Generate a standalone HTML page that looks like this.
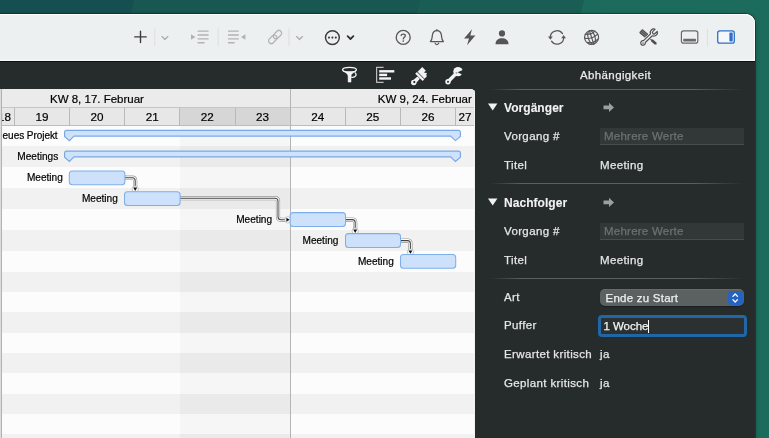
<!DOCTYPE html>
<html lang="de">
<head>
<meta charset="utf-8">
<title>Abhängigkeit</title>
<style>
html,body{margin:0;padding:0;}
body{width:769px;height:438px;overflow:hidden;position:relative;
  background:#1b6a5c;
  font-family:"Liberation Sans",sans-serif;}
.abs{position:absolute;}
#win{will-change:transform;position:absolute;left:0;top:14px;width:754.6px;height:424px;background:#eef0f0;border-top-right-radius:9px;overflow:hidden;
  box-shadow:0 0 0 0.8px rgba(0,20,20,.5),0 1px 5px rgba(0,0,0,.32);}
#toolbar{position:absolute;left:0;top:0;width:754.6px;height:46.8px;background:#edf0f1;box-shadow:inset 0 1px 0 #fff,inset -1px 0 0 rgba(255,255,255,.8),inset 0 -1.6px 0 #f7f9f9;border-top-right-radius:9px;z-index:2;}
#darkbar{position:absolute;left:0;top:46.8px;width:755px;height:377.2px;background:#262c2c;box-shadow:inset 0 1px 0 #0e1212;}
#gantt{position:absolute;left:0;top:75px;width:475.3px;height:349px;background:#fcfcfc;border-top-right-radius:4.5px;overflow:hidden;}
.row{position:absolute;left:0;width:475px;height:20.8px;}
.hdr{position:absolute;left:0;width:475px;background:#e9e9e9;}
.lbl{-webkit-text-stroke:0.2px #000;position:absolute;font-size:9.9px;color:#000;white-space:nowrap;text-align:right;line-height:12px;}
.day{-webkit-text-stroke:0.2px #000;position:absolute;top:19px;font-size:11.7px;color:#000;line-height:18px;text-align:center;width:55.14px;}
.wk{-webkit-text-stroke:0.2px #000;position:absolute;top:0.5px;font-size:11.5px;color:#000;line-height:18px;white-space:nowrap;}
#panel{position:absolute;left:476px;top:47px;width:278.6px;height:377px;color:#e6e6e6;font-size:11.5px;letter-spacing:0.37px;-webkit-text-stroke:0.25px currentColor;}
#panel .t{position:absolute;white-space:nowrap;line-height:14px;}
#panel .b{font-weight:bold;color:#f2f2f2;font-size:12px;letter-spacing:0.05px;-webkit-text-stroke:0.1px currentColor;}
.sep{position:absolute;left:14px;width:254px;height:1px;background:linear-gradient(90deg,rgba(90,96,96,0),rgba(90,96,96,1) 12%,rgba(90,96,96,1) 80%,rgba(90,96,96,0));}
.inp{position:absolute;left:124px;width:144px;height:17px;background:#323838;box-sizing:border-box;border-bottom:1px solid #474d4d;color:#6b7272;font-size:11.5px;letter-spacing:0.24px;line-height:17px;padding-left:4px;overflow:hidden;}
</style>
</head>
<body>
<svg class="abs" style="left:0;top:0" width="769" height="438" viewBox="0 0 769 438">
  <defs><linearGradient id="bgr" x1="0" x2="1" y1="0" y2="0"><stop offset="0" stop-color="#1a6558"/><stop offset="1" stop-color="#1c6c5d"/></linearGradient></defs>
  <rect x="0" y="0" width="769" height="438" fill="url(#bgr)"/>
  <polygon points="0,0 584,0 480,438 0,438" fill="#195d54"/>
  <polygon points="0,0 420,0 316,438 0,438" fill="#185752"/>
  <polygon points="0,0 134,0 30,438 0,438" fill="#164f4f"/>
</svg>
<div id="win">
  <div id="toolbar">
    <svg class="abs" style="left:0;top:0" width="755" height="47" viewBox="0 14 755 47" fill="none" stroke-linecap="round" stroke-linejoin="round">
      <!-- plus -->
      <path d="M134.8 36.9H146.2M140.5 31.3V42.6" stroke="#3c3c3c" stroke-width="1.4"/>
      <path d="M154.8 28.8V46" stroke="#dcdedd" stroke-width="1"/>
      <path d="M162 36.6L164.9 39.5L167.8 36.6" stroke="#adafaf" stroke-width="1.35"/>
      <!-- indent -->
      <g stroke="#b1b3b3" stroke-width="1.35" stroke-linecap="butt">
        <path d="M197.6 31.1H208.6M197.6 35H208.6M197.6 38.9H208.6M197.6 42.7H204.6"/>
      </g>
      <path d="M191 34.3L195.4 37L191 39.7Z" fill="#b1b3b3" stroke="none"/>
      <path d="M218.2 28.8V46" stroke="#dcdedd" stroke-width="1"/>
      <!-- outdent -->
      <g stroke="#b1b3b3" stroke-width="1.35" stroke-linecap="butt">
        <path d="M228 31.1H238.8M228 35H238.8M228 38.9H238.8M228 42.7H234.6"/>
      </g>
      <path d="M245.4 34.3L241 37L245.4 39.7Z" fill="#b1b3b3" stroke="none"/>
      <!-- link -->
      <g stroke="#b3b5b5" stroke-width="1.3" transform="translate(275.1 37) rotate(-45)">
        <rect x="-8.1" y="-2.75" width="9.6" height="5.5" rx="2.75"/>
        <rect x="-1.5" y="-2.75" width="9.6" height="5.5" rx="2.75"/>
      </g>
      <path d="M289 28.8V46" stroke="#dcdedd" stroke-width="1"/>
      <path d="M296.6 36.6L299.5 39.5L302.4 36.6" stroke="#adafaf" stroke-width="1.35"/>
      <!-- ellipsis -->
      <circle cx="332.4" cy="37.6" r="6.9" stroke="#3c3c3c" stroke-width="1.45"/>
      <circle cx="329" cy="37.6" r="1.05" fill="#3c3c3c" stroke="none"/>
      <circle cx="332.4" cy="37.6" r="1.05" fill="#3c3c3c" stroke="none"/>
      <circle cx="335.8" cy="37.6" r="1.05" fill="#3c3c3c" stroke="none"/>
      <path d="M347.6 36.2L350.5 39L353.4 36.2" stroke="#333" stroke-width="1.75"/>
      <!-- question -->
      <circle cx="403.2" cy="37.4" r="7" stroke="#585858" stroke-width="1.35"/>
      <path d="M401.2 35.6C401.2 33.6 405.3 33.6 405.3 35.7C405.3 37.1 403.3 37.3 403.3 38.9" stroke="#585858" stroke-width="1.35"/>
      <circle cx="403.3" cy="41" r="0.85" fill="#585858" stroke="none"/>
      <!-- bell -->
      <path d="M430.4 41.6C432.4 40 432 37.5 432.4 35C432.9 31.8 434.8 30.6 436.9 30.6C439 30.6 440.9 31.8 441.4 35C441.8 37.5 441.4 40 443.4 41.6Z" stroke="#585858" stroke-width="1.3"/>
      <path d="M435.1 43.2C435.5 45 438.3 45 438.7 43.2" stroke="#5a5a5a" stroke-width="1.2"/>
      <path d="M436.9 29.6V30.6" stroke="#5a5a5a" stroke-width="1.2"/>
      <!-- bolt -->
      <path d="M472 29.3L464 38.6H469L467 45.3L475.4 35.6H470.3Z" fill="#555" stroke="none"/>
      <!-- person -->
      <circle cx="502" cy="33.4" r="3.1" fill="#555" stroke="none"/>
      <path d="M495.5 44.2C495.5 40 498.5 38.3 502 38.3C505.5 38.3 508.5 40 508.5 44.2Z" fill="#555" stroke="none"/>
      <!-- sync -->
      <g stroke="#5a5a5a" stroke-width="1.3">
        <path d="M550.3 37.4A6.7 6.7 0 0 1 562.5 33.6"/>
        <path d="M563.7 37.4A6.7 6.7 0 0 1 551.5 41.2"/>
      </g>
      <path d="M548 36.6H552.8L550.4 39.8Z" fill="#5a5a5a" stroke="none"/>
      <path d="M566 38.2H561.2L563.6 35Z" fill="#5a5a5a" stroke="none"/>
      <!-- globe -->
      <g stroke="#585858" stroke-width="1.15" transform="rotate(-18 591.6 37.4)">
        <circle cx="591.6" cy="37.4" r="7"/>
        <ellipse cx="591.6" cy="37.4" rx="3.4" ry="7"/>
        <path d="M591.6 30.4V44.4"/>
        <path d="M584.8 36.2Q591.6 39.4 598.4 36.2"/>
        <path d="M586.4 32.4Q591.6 35 596.8 32.4"/>
        <path d="M585.8 40.8Q591.6 43.8 597.4 40.8"/>
      </g>
      <!-- tools -->
      <g transform="translate(648.5 37.5) rotate(40.4)" stroke="none" fill="#4e4e4e">
        <rect x="-10.4" y="-2.5" width="9" height="5" rx="1.1"/>
        <rect x="-2" y="-0.65" width="7" height="1.3"/>
        <path d="M4.4 -1.3H9.2L10.7 0L9.2 1.3H4.4Z"/>
      </g>
      <g transform="translate(648.5 37.5) rotate(40.4)" stroke="#9fa1a1" stroke-width="0.6">
        <path d="M-9.4 -0.9H-2.6M-9.4 0.9H-2.6"/>
      </g>
      <g transform="translate(648.45 37.7) rotate(-43.8)">
        <path d="M-5.6 -1.3L4.14 -1.3A3.6 3.6 0 0 1 10.77 -1.5L7.6 -1.5A1.5 1.5 0 0 0 7.6 1.5L10.77 1.5A3.6 3.6 0 0 1 4.14 1.3L-5.6 1.3A2.3 2.3 0 1 1 -5.6 -1.3Z" fill="#edf0f1" stroke="#edf0f1" stroke-width="2.4"/>
        <path d="M-5.6 -1.3L4.14 -1.3A3.6 3.6 0 0 1 10.77 -1.5L7.6 -1.5A1.5 1.5 0 0 0 7.6 1.5L10.77 1.5A3.6 3.6 0 0 1 4.14 1.3L-5.6 1.3A2.3 2.3 0 1 1 -5.6 -1.3Z" fill="#edf0f1" stroke="#4e4e4e" stroke-width="1.15"/>
        <circle cx="-7.5" cy="0" r="0.7" fill="#4e4e4e" stroke="none"/>
      </g>
      <!-- bottom panel -->
      <rect x="681.4" y="30.8" width="16.4" height="12.4" rx="2.2" stroke="#6a6a6a" stroke-width="1.2"/>
      <rect x="683.2" y="38.8" width="12.8" height="2.6" rx="0.6" fill="#6a6a6a" stroke="none"/>
      <path d="M707.4 29.4V45.8" stroke="#dcdedd" stroke-width="1"/>
      <!-- right panel -->
      <rect x="717.7" y="30.8" width="16.6" height="12.4" rx="2.2" stroke="#2f6fc4" stroke-width="1.3" fill="#f4f8fd"/>
      <rect x="729.4" y="32.6" width="3.3" height="8.8" rx="0.6" fill="#2f6fc4" stroke="none"/>
    </svg>
  </div>
  <div id="darkbar">
    <svg class="abs" style="left:0;top:0" width="476" height="29" viewBox="0 61 476 29" fill="none" stroke-linecap="round" stroke-linejoin="round">
      <!-- funnel -->
      <ellipse cx="349.5" cy="69.7" rx="6.9" ry="2.3" stroke="#f4f4f4" stroke-width="1.3"/>
      <path d="M342.9 70.6C344.6 72.4 347.9 73.4 348.1 76.2V82.1H351V76.2C351.2 73.4 354.4 72.4 356.1 70.6C353 72.6 346 72.6 342.9 70.6Z" fill="#f4f4f4" stroke="#f4f4f4" stroke-width="0.5"/>
      <path d="M351.4 77.2C355.6 78 357.4 74.6 355 72.6" stroke="#f4f4f4" stroke-width="1.2"/>
      <!-- gantt icon -->
      <path d="M383.6 67.3H376.6V82.3H383.6" stroke="#bdbdbd" stroke-width="1.2" stroke-linecap="butt"/>
      <rect x="379.2" y="70.1" width="15.1" height="2.4" fill="#f6f6f6"/>
      <rect x="379.2" y="73.7" width="7.9" height="2.4" fill="#f6f6f6"/>
      <rect x="379.2" y="77.3" width="11.8" height="2.4" fill="#f6f6f6"/>
      <!-- brush -->
      <g transform="translate(419.65 76.6) rotate(45)" fill="#f2f2f2" stroke="none">
        <path d="M-1.7 1.4H1.7L2.1 6.4A2.8 2.8 0 1 1 -2.1 6.4Z"/>
        <circle cx="0" cy="7.6" r="1.1" fill="#262c2c"/>
        <rect x="-5.2" y="-1.3" width="10.4" height="2.3"/>
        <path d="M-4.9 -2H4.9V-5.6H3.3V-7.2H1.5V-6.2H0.2V-8.6H-4.9Z"/>
      </g>
      <!-- wrench -->
      <path d="M448 81.8L456 73.6" stroke="#f2f2f2" stroke-width="3.5" stroke-linecap="round"/>
      <circle cx="448" cy="81.8" r="2.7" fill="#f2f2f2"/>
      <circle cx="448" cy="81.8" r="1" fill="#262c2c"/>
      <circle cx="458" cy="71.6" r="4.7" fill="#f2f2f2"/>
      <path d="M457.6 72.2L464 69.4L464 75.6Z" fill="#262c2c"/>
      <circle cx="456.4" cy="72.8" r="0.9" fill="#9a9c9c"/>
    </svg>
  </div>
  <div id="gantt">
    <div class="abs" style="left:0;top:0;width:476px;height:18.4px;background:#ebebeb;"></div>
    <div class="abs" style="left:0;top:18.4px;width:476px;height:18.1px;background:#e7e7e7;"></div>
    <div class="abs" style="left:179.8px;top:18.4px;width:110.3px;height:18.1px;background:#d6d6d6;"></div>
    <div class="abs" style="left:0;top:36.50px;width:476px;height:20.92px;background:#fcfcfc;"></div>
    <div class="abs" style="left:179.8px;top:36.50px;width:110.3px;height:20.92px;background:#f6f6f6;"></div>
    <div class="abs" style="left:0;top:57.37px;width:476px;height:20.92px;background:#f1f1f1;"></div>
    <div class="abs" style="left:179.8px;top:57.37px;width:110.3px;height:20.92px;background:#eaeaea;"></div>
    <div class="abs" style="left:0;top:78.24px;width:476px;height:20.92px;background:#fcfcfc;"></div>
    <div class="abs" style="left:179.8px;top:78.24px;width:110.3px;height:20.92px;background:#f6f6f6;"></div>
    <div class="abs" style="left:0;top:99.11px;width:476px;height:20.92px;background:#f1f1f1;"></div>
    <div class="abs" style="left:179.8px;top:99.11px;width:110.3px;height:20.92px;background:#eaeaea;"></div>
    <div class="abs" style="left:0;top:119.98px;width:476px;height:20.92px;background:#fcfcfc;"></div>
    <div class="abs" style="left:179.8px;top:119.98px;width:110.3px;height:20.92px;background:#f6f6f6;"></div>
    <div class="abs" style="left:0;top:140.85px;width:476px;height:20.92px;background:#f1f1f1;"></div>
    <div class="abs" style="left:179.8px;top:140.85px;width:110.3px;height:20.92px;background:#eaeaea;"></div>
    <div class="abs" style="left:0;top:161.72px;width:476px;height:20.92px;background:#fcfcfc;"></div>
    <div class="abs" style="left:179.8px;top:161.72px;width:110.3px;height:20.92px;background:#f6f6f6;"></div>
    <div class="abs" style="left:0;top:182.70px;width:476px;height:20.39px;background:#f1f1f1;"></div>
    <div class="abs" style="left:179.8px;top:182.70px;width:110.3px;height:20.39px;background:#eaeaea;"></div>
    <div class="abs" style="left:0;top:203.04px;width:476px;height:20.39px;background:#fcfcfc;"></div>
    <div class="abs" style="left:179.8px;top:203.04px;width:110.3px;height:20.39px;background:#f6f6f6;"></div>
    <div class="abs" style="left:0;top:223.38px;width:476px;height:20.39px;background:#f1f1f1;"></div>
    <div class="abs" style="left:179.8px;top:223.38px;width:110.3px;height:20.39px;background:#eaeaea;"></div>
    <div class="abs" style="left:0;top:243.72px;width:476px;height:20.39px;background:#fcfcfc;"></div>
    <div class="abs" style="left:179.8px;top:243.72px;width:110.3px;height:20.39px;background:#f6f6f6;"></div>
    <div class="abs" style="left:0;top:264.06px;width:476px;height:20.39px;background:#f1f1f1;"></div>
    <div class="abs" style="left:179.8px;top:264.06px;width:110.3px;height:20.39px;background:#eaeaea;"></div>
    <div class="abs" style="left:0;top:284.40px;width:476px;height:20.39px;background:#fcfcfc;"></div>
    <div class="abs" style="left:179.8px;top:284.40px;width:110.3px;height:20.39px;background:#f6f6f6;"></div>
    <div class="abs" style="left:0;top:304.74px;width:476px;height:20.39px;background:#f1f1f1;"></div>
    <div class="abs" style="left:179.8px;top:304.74px;width:110.3px;height:20.39px;background:#eaeaea;"></div>
    <div class="abs" style="left:0;top:325.08px;width:476px;height:20.39px;background:#fcfcfc;"></div>
    <div class="abs" style="left:179.8px;top:325.08px;width:110.3px;height:20.39px;background:#f6f6f6;"></div>
    <div class="abs" style="left:0;top:345.42px;width:476px;height:20.39px;background:#f1f1f1;"></div>
    <div class="abs" style="left:179.8px;top:345.42px;width:110.3px;height:20.39px;background:#eaeaea;"></div>
    <div class="abs" style="left:0;top:18px;width:476px;height:1px;background:#c6c6c6;"></div>
    <div class="abs" style="left:0;top:36px;width:476px;height:1px;background:#bdbdbd;"></div>
    <div class="abs" style="left:13.9px;top:18.5px;width:1px;height:18px;background:#b9b9b9;"></div>
    <div class="abs" style="left:69.0px;top:18.5px;width:1px;height:18px;background:#b9b9b9;"></div>
    <div class="abs" style="left:124.2px;top:18.5px;width:1px;height:18px;background:#b9b9b9;"></div>
    <div class="abs" style="left:179.3px;top:18.5px;width:1px;height:18px;background:#b9b9b9;"></div>
    <div class="abs" style="left:234.5px;top:18.5px;width:1px;height:18px;background:#b9b9b9;"></div>
    <div class="abs" style="left:289.6px;top:18.5px;width:1px;height:18px;background:#b9b9b9;"></div>
    <div class="abs" style="left:344.7px;top:18.5px;width:1px;height:18px;background:#b9b9b9;"></div>
    <div class="abs" style="left:399.9px;top:18.5px;width:1px;height:18px;background:#b9b9b9;"></div>
    <div class="abs" style="left:455.0px;top:18.5px;width:1px;height:18px;background:#b9b9b9;"></div>
    <div class="abs" style="left:510.2px;top:18.5px;width:1px;height:18px;background:#b9b9b9;"></div>
    <div class="abs" style="left:289.7px;top:0;width:1px;height:349px;background:#b4b4b4;"></div>
    <div class="abs" style="left:474.3px;top:0;width:1px;height:349px;background:#f1f1f1;"></div>
    <div class="wk" style="left:50px;">KW 8, 17. Februar</div>
    <div class="wk" style="right:3.5px;">KW 9, 24. Februar</div>
    <div class="abs" style="left:2.2px;top:0;width:20px;height:37px;overflow:hidden;"><div class="day" style="left:-4.2px;width:auto;">18</div></div>
    <div class="day" style="left:14.4px;">19</div>
    <div class="day" style="left:69.5px;">20</div>
    <div class="day" style="left:124.7px;">21</div>
    <div class="day" style="left:179.8px;">22</div>
    <div class="day" style="left:235.0px;">23</div>
    <div class="day" style="left:290.1px;">24</div>
    <div class="day" style="left:345.2px;">25</div>
    <div class="day" style="left:400.4px;">26</div>
    <div class="day" style="left:458.6px;width:auto;">27</div>
    <svg class="abs" style="left:0;top:0" width="475" height="349" viewBox="0 89 475 349" fill="none">
    <path d="M64.6 132.3Q64.6 130.3 66.6 130.3H458.4Q460.4 130.3 460.4 132.3V136.5L455.4 140.6L450.6 136.1H74L69.4 140.6L64.6 136.5Z" fill="#cfe2fb" stroke="#78a9e6" stroke-width="1.15"/>
    <path d="M64.6 153.1Q64.6 151.1 66.6 151.1H458.4Q460.4 151.1 460.4 153.1V157.3L455.4 161.4L450.6 156.9H74L69.4 161.4L64.6 157.3Z" fill="#cfe2fb" stroke="#78a9e6" stroke-width="1.15"/>
    <path d="M124.5 177.7H132.2Q135.2 177.7 135.2 180.7V188.6" stroke="#959595" stroke-width="4.2" stroke-linejoin="round"/><path d="M124.5 177.7H132.2Q135.2 177.7 135.2 180.7V188.6" stroke="#fcfcfc" stroke-width="3" stroke-linejoin="round"/><path d="M124.5 177.7H132.2Q135.2 177.7 135.2 180.7V188.6" stroke="#444" stroke-width="1.05" stroke-linejoin="round"/>
    <ellipse cx="135.2" cy="189.0" rx="3.2" ry="3" fill="#fcfcfc" stroke="#a8a8a8" stroke-width="0.6"/><path d="M133.2 187.6L137.2 187.6L135.2 190.9Z" fill="#111"/>
    <path d="M180 198.2H275Q278 198.2 278 201.2V216.8Q278 219.8 281 219.8H287" stroke="#959595" stroke-width="4.2" stroke-linejoin="round"/><path d="M180 198.2H275Q278 198.2 278 201.2V216.8Q278 219.8 281 219.8H287" stroke="#fcfcfc" stroke-width="3" stroke-linejoin="round"/><path d="M180 198.2H275Q278 198.2 278 201.2V216.8Q278 219.8 281 219.8H287" stroke="#444" stroke-width="1.05" stroke-linejoin="round"/>
    <ellipse cx="287.8" cy="219.8" rx="3" ry="3.2" fill="#fcfcfc" stroke="#a8a8a8" stroke-width="0.6"/><path d="M286.4 217.8L286.4 221.8L289.7 219.8Z" fill="#111"/>
    <path d="M345 219.6H352.2Q355.2 219.6 355.2 222.6V230.6" stroke="#959595" stroke-width="4.2" stroke-linejoin="round"/><path d="M345 219.6H352.2Q355.2 219.6 355.2 222.6V230.6" stroke="#fcfcfc" stroke-width="3" stroke-linejoin="round"/><path d="M345 219.6H352.2Q355.2 219.6 355.2 222.6V230.6" stroke="#444" stroke-width="1.05" stroke-linejoin="round"/>
    <ellipse cx="355.2" cy="231.0" rx="3.2" ry="3" fill="#fcfcfc" stroke="#a8a8a8" stroke-width="0.6"/><path d="M353.2 229.6L357.2 229.6L355.2 232.9Z" fill="#111"/>
    <path d="M400 240.6H407.4Q410.4 240.6 410.4 243.6V251.6" stroke="#959595" stroke-width="4.2" stroke-linejoin="round"/><path d="M400 240.6H407.4Q410.4 240.6 410.4 243.6V251.6" stroke="#fcfcfc" stroke-width="3" stroke-linejoin="round"/><path d="M400 240.6H407.4Q410.4 240.6 410.4 243.6V251.6" stroke="#444" stroke-width="1.05" stroke-linejoin="round"/>
    <ellipse cx="410.4" cy="251.9" rx="3.2" ry="3" fill="#fcfcfc" stroke="#a8a8a8" stroke-width="0.6"/><path d="M408.4 250.5L412.4 250.5L410.4 253.8Z" fill="#111"/>
    <rect x="69.3" y="170.9" width="55.6" height="13.8" rx="3" fill="#cde1fb" stroke="#7fafe9" stroke-width="1.05"/>
    <rect x="124.5" y="191.7" width="55.6" height="13.8" rx="3" fill="#cde1fb" stroke="#7fafe9" stroke-width="1.05"/>
    <rect x="290.2" y="212.6" width="55.3" height="13.8" rx="3" fill="#cde1fb" stroke="#7fafe9" stroke-width="1.05"/>
    <rect x="345.5" y="233.6" width="55.0" height="13.8" rx="3" fill="#cde1fb" stroke="#7fafe9" stroke-width="1.05"/>
    <rect x="400.5" y="254.5" width="55.2" height="13.8" rx="3" fill="#cde1fb" stroke="#7fafe9" stroke-width="1.05"/>
    </svg>
    <div class="lbl" style="font-size:10px;letter-spacing:-0.05px;right:417.7px;top:41.1px;">Neues Projekt</div>
    <div class="lbl" style="font-size:10.1px;right:417.0px;top:62.0px;">Meetings</div>
    <div class="lbl" style="font-size:10.1px;right:412.5px;top:83.3px;">Meeting</div>
    <div class="lbl" style="font-size:10.1px;right:357.5px;top:104.3px;">Meeting</div>
    <div class="lbl" style="font-size:10.1px;right:203.2px;top:125.3px;">Meeting</div>
    <div class="lbl" style="font-size:10.1px;right:136.9px;top:146.3px;">Meeting</div>
    <div class="lbl" style="font-size:10.1px;right:81.5px;top:167.3px;">Meeting</div>
    <div class="abs" style="left:0;top:0;width:1.2px;height:349px;background:#dcdcdc;"></div>
    <div class="abs" style="left:1.2px;top:0;width:1px;height:349px;background:#b2b2b2;"></div>
  </div>
  <div id="panel">
    <div class="t" style="left:0;width:279px;text-align:center;top:6.7px;color:#ececec;">Abhängigkeit</div>
    <div class="sep" style="top:27.8px"></div>
    <svg class="abs" style="left:12px;top:42px" width="10" height="8"><path d="M0 0.5H9.4L4.7 7.5Z" fill="#f2f2f2"/></svg>
    <div class="t b" style="left:28px;top:39.6px;">Vorgänger</div>
    <svg class="abs" style="left:127px;top:41px" width="12" height="11"><path d="M0.5 3.6H6V0.8L11 5.4L6 10V7.2H0.5Z" fill="#9c9f9f"/></svg>
    <div class="t" style="left:28px;top:67.5px;">Vorgang #</div>
    <div class="inp" style="top:67.3px;">Mehrere Werte</div>
    <div class="t" style="left:28px;top:96.5px;">Titel</div>
    <div class="t" style="left:124px;top:96.5px;">Meeting</div>
    <div class="sep" style="top:121.8px"></div>
    <svg class="abs" style="left:12px;top:137px" width="10" height="8"><path d="M0 0.5H9.4L4.7 7.5Z" fill="#f2f2f2"/></svg>
    <div class="t b" style="left:28px;top:134.6px;">Nachfolger</div>
    <svg class="abs" style="left:127px;top:136px" width="12" height="11"><path d="M0.5 3.6H6V0.8L11 5.4L6 10V7.2H0.5Z" fill="#9c9f9f"/></svg>
    <div class="t" style="left:28px;top:162.5px;">Vorgang #</div>
    <div class="inp" style="top:162.3px;">Mehrere Werte</div>
    <div class="t" style="left:28px;top:191.5px;">Titel</div>
    <div class="t" style="left:124px;top:191.5px;">Meeting</div>
    <div class="sep" style="top:217px"></div>
    <div class="t" style="left:28px;top:228.5px;">Art</div>
    <div class="abs" style="left:123.5px;top:228.2px;width:144.5px;height:17.2px;border-radius:5px;background:#5b6161;box-shadow:inset 0 0.6px 0 rgba(255,255,255,.16),0 0.5px 1px rgba(0,0,0,.35);color:#f0f0f0;font-size:11.5px;letter-spacing:0.24px;line-height:18px;padding-left:6px;box-sizing:border-box;">Ende zu Start</div>
    <div class="abs" style="left:252.2px;top:230.2px;width:14.4px;height:13.6px;border-radius:4px;background:#2463c2;"></div>
    <svg class="abs" style="left:252.2px;top:230px" width="15" height="14" fill="none" stroke="#fff" stroke-width="1.3" stroke-linecap="round" stroke-linejoin="round"><path d="M4.9 5.4L7.2 3L9.5 5.4M4.9 8.6L7.2 11L9.5 8.6"/></svg>
    <div class="t" style="left:28px;top:257.3px;">Puffer</div>
    <div class="abs" style="left:122px;top:254.4px;width:148.6px;height:22px;box-sizing:border-box;border:3px solid #2166a6;border-radius:4px;background:#2b3131;color:#f4f4f4;font-size:11.5px;letter-spacing:-0.07px;line-height:16.6px;padding-left:2.6px;white-space:nowrap;">1 Woche<span style="display:inline-block;width:1.3px;height:13px;background:#fff;vertical-align:-2.4px;margin-left:-0.5px;"></span></div>
    <div class="t" style="left:28px;top:286px;">Erwartet kritisch</div>
    <div class="t" style="left:124px;top:286px;">ja</div>
    <div class="t" style="left:28px;top:315px;">Geplant kritisch</div>
    <div class="t" style="left:124px;top:315px;">ja</div>
  </div>
</div>
</body>
</html>
